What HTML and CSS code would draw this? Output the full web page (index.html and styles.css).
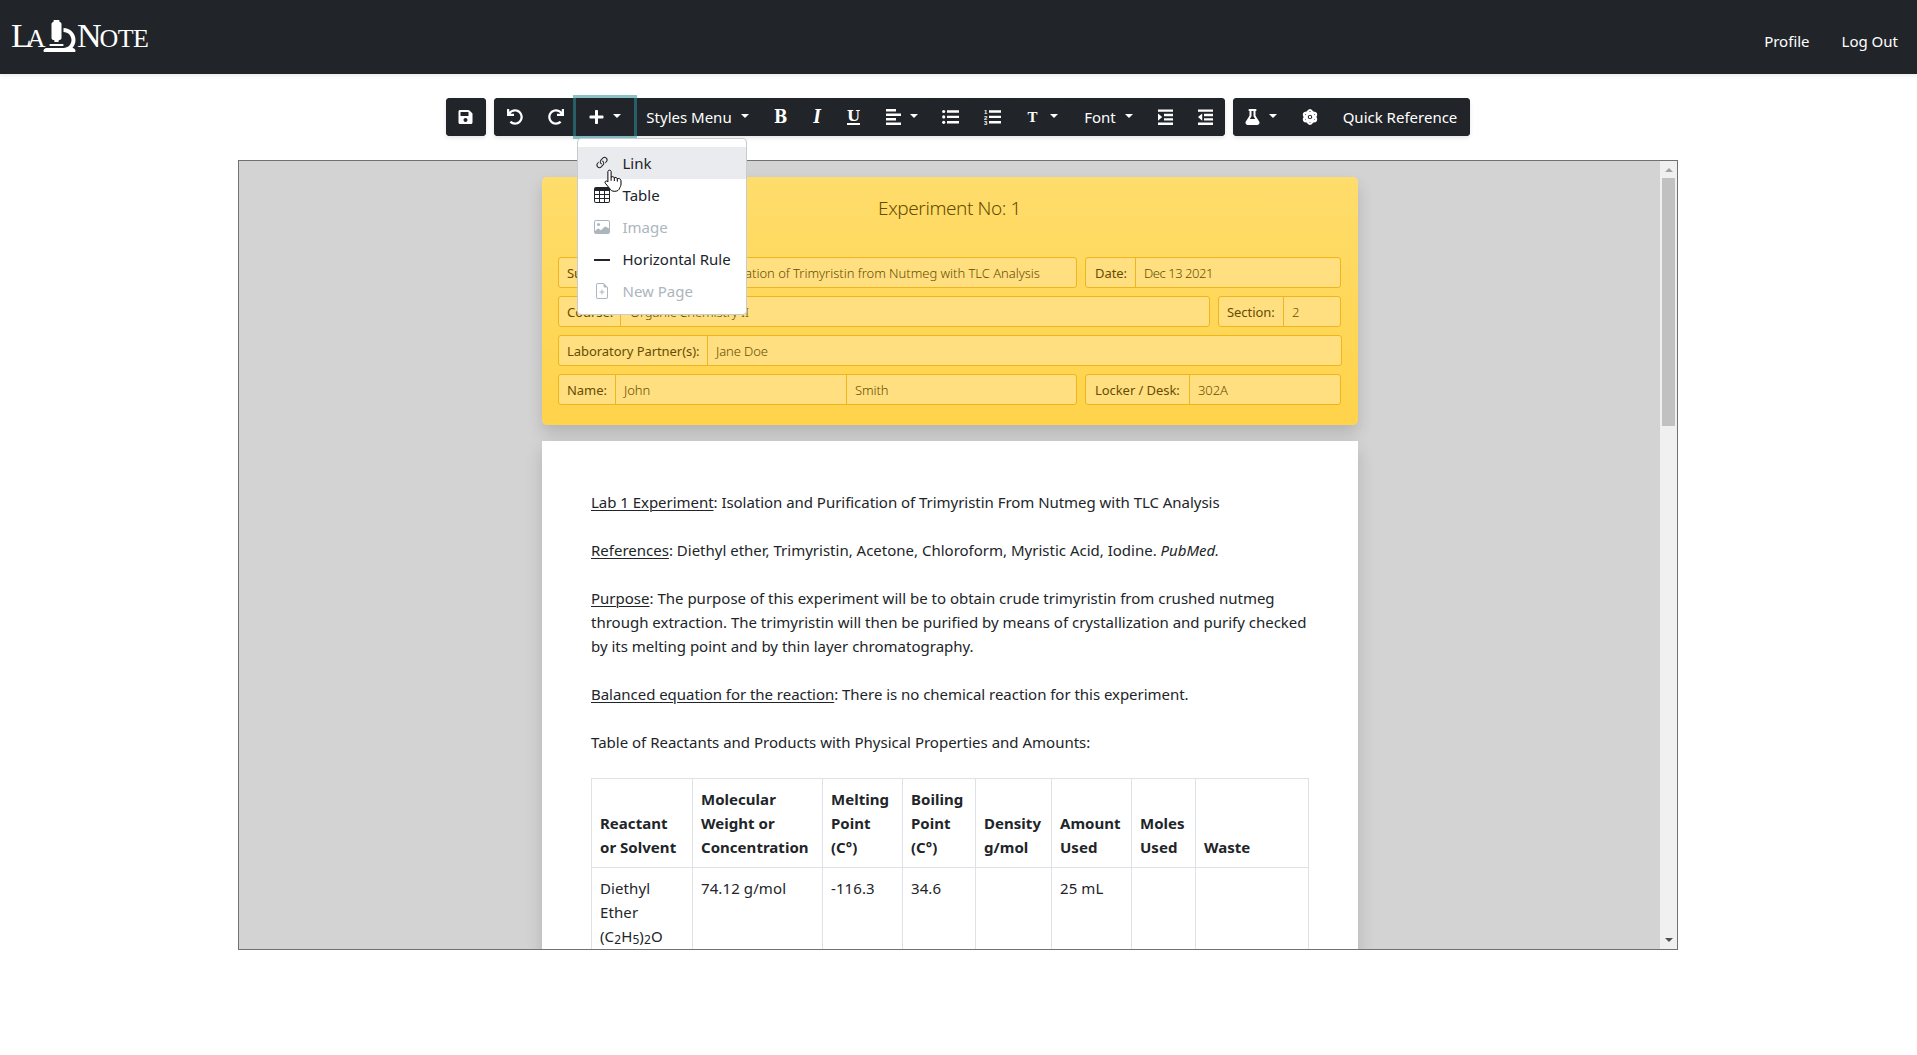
FILE: index.html
```html
<!DOCTYPE html>
<html lang="en">
<head>
<meta charset="utf-8">
<title>LabNote</title>
<link rel="stylesheet" href="styles.css">
</head>
<body>
<header class="navbar">
  <a class="brand"><span class="brand-la">L<small>A</small></span><svg class="brand-icon" viewBox="0 0 512 512"><path d="M160 320h12v16c0 8.84 7.16 16 16 16h40c8.84 0 16-7.16 16-16v-16h12c17.67 0 32-14.33 32-32V64c0-17.67-14.33-32-32-32V16c0-8.84-7.16-16-16-16h-64c-8.84 0-16 7.16-16 16v16c-17.67 0-32 14.33-32 32v224c0 17.67 14.33 32 32 32zm304 128h-1.29C493.24 413.99 512 369.2 512 320c0-105.88-86.12-192-192-192v64c70.58 0 128 57.42 128 128s-57.42 128-128 128H48c-26.51 0-48 21.49-48 48 0 8.84 7.16 16 16 16h480c8.84 0 16-7.16 16-16 0-26.51-21.49-48-48-48zm-360-32h208c4.42 0 8-3.58 8-8v-16c0-4.42-3.58-8-8-8H104c-4.42 0-8 3.58-8 8v16c0 4.42 3.58 8 8 8z"/></svg><span class="brand-note">N<small>OTE</small></span></a>
  <nav class="nav-links"><a>Profile</a><a>Log Out</a></nav>
</header>

<div class="toolbar">
  <div class="btn-group">
    <button class="btn w-save"><svg class="icon" viewBox="0 0 448 512"><path d="M433.941 129.941l-83.882-83.882A48 48 0 0 0 316.118 32H48C21.49 32 0 53.49 0 80v352c0 26.51 21.49 48 48 48h352c26.51 0 48-21.49 48-48V163.882a48 48 0 0 0-14.059-33.941zM224 416c-35.346 0-64-28.654-64-64 0-35.346 28.654-64 64-64s64 28.654 64 64c0 35.346-28.654 64-64 64zm96-304.52V212c0 6.627-5.373 12-12 12H76c-6.627 0-12-5.373-12-12V108c0-6.627 5.373-12 12-12h228.52c3.183 0 6.235 1.264 8.485 3.515l3.48 3.48A11.996 11.996 0 0 1 320 111.48z"/></svg></button>
  </div>
  <div class="btn-group">
    <button class="btn w-undo"><svg class="icon icon-16" viewBox="0 0 512 512"><path d="M212.333 224.333H12c-6.627 0-12-5.373-12-12V12C0 5.373 5.373 0 12 0h48c6.627 0 12 5.373 12 12v78.112C117.773 39.279 184.26 7.47 258.175 8.007c136.906.994 246.448 111.623 246.157 248.532C504.041 393.258 393.12 504 256.333 504c-64.089 0-122.496-24.313-166.51-64.215-5.099-4.622-5.334-12.554-.467-17.42l33.967-33.967c4.474-4.474 11.662-4.717 16.401-.525C170.76 415.336 211.58 432 256.333 432c97.268 0 176-78.716 176-176 0-97.267-78.716-176-176-176-58.496 0-110.28 28.476-142.274 72.333h98.274c6.627 0 12 5.373 12 12v48c0 6.627-5.373 12-12 12z"/></svg></button>
    <button class="btn w-redo"><svg class="icon icon-16 flip" viewBox="0 0 512 512"><path d="M212.333 224.333H12c-6.627 0-12-5.373-12-12V12C0 5.373 5.373 0 12 0h48c6.627 0 12 5.373 12 12v78.112C117.773 39.279 184.26 7.47 258.175 8.007c136.906.994 246.448 111.623 246.157 248.532C504.041 393.258 393.12 504 256.333 504c-64.089 0-122.496-24.313-166.51-64.215-5.099-4.622-5.334-12.554-.467-17.42l33.967-33.967c4.474-4.474 11.662-4.717 16.401-.525C170.76 415.336 211.58 432 256.333 432c97.268 0 176-78.716 176-176 0-97.267-78.716-176-176-176-58.496 0-110.28 28.476-142.274 72.333h98.274c6.627 0 12 5.373 12 12v48c0 6.627-5.373 12-12 12z"/></svg></button>
    <div class="dropdown">
      <button class="btn w-insert focused"><svg class="icon" viewBox="0 0 448 512"><path d="M416 208H272V64c0-17.67-14.33-32-32-32h-32c-17.67 0-32 14.33-32 32v144H32c-17.67 0-32 14.33-32 32v32c0 17.67 14.33 32 32 32h144v144c0 17.67 14.33 32 32 32h32c17.67 0 32-14.33 32-32V304h144c17.67 0 32-14.33 32-32v-32c0-17.67-14.33-32-32-32z"/></svg><i class="caret"></i></button>
      <ul class="menu">
        <li class="menu-item active"><svg viewBox="0 0 16 16"><path d="M4.715 6.542 3.343 7.914a3 3 0 1 0 4.243 4.243l1.828-1.829A3 3 0 0 0 8.586 5.5L8 6.086a1.002 1.002 0 0 0-.154.199 2 2 0 0 1 .861 3.337L6.88 11.45a2 2 0 1 1-2.83-2.83l.793-.792a4.018 4.018 0 0 1-.128-1.287z"/><path d="M6.586 4.672A3 3 0 0 0 7.414 9.5l.775-.776a2 2 0 0 1-.896-3.346L9.12 3.55a2 2 0 1 1 2.83 2.83l-.793.792c.112.42.155.855.128 1.287l1.372-1.372a3 3 0 1 0-4.243-4.243L6.586 4.672z"/></svg>Link</li>
        <li class="menu-item"><svg viewBox="0 0 16 16"><path d="M0 2a2 2 0 0 1 2-2h12a2 2 0 0 1 2 2v12a2 2 0 0 1-2 2H2a2 2 0 0 1-2-2V2zm15 2h-4v3h4V4zm0 4h-4v3h4V8zm0 4h-4v3h3a1 1 0 0 0 1-1v-2zm-5 3v-3H6v3h4zm-5 0v-3H1v2a1 1 0 0 0 1 1h3zm-4-4h4V8H1v3zm0-4h4V4H1v3zm5-3v3h4V4H6zm4 4H6v3h4V8z"/></svg>Table</li>
        <li class="menu-item disabled"><svg viewBox="0 0 16 16"><path d="M6.002 5.5a1.5 1.5 0 1 1-3 0 1.5 1.5 0 0 1 3 0z"/><path d="M2.002 1a2 2 0 0 0-2 2v10a2 2 0 0 0 2 2h12a2 2 0 0 0 2-2V3a2 2 0 0 0-2-2h-12zm12 1a1 1 0 0 1 1 1v6.5l-3.777-1.947a.5.5 0 0 0-.577.093l-3.71 3.71-2.66-1.772a.5.5 0 0 0-.63.062L1.002 12V3a1 1 0 0 1 1-1h12z"/></svg>Image</li>
        <li class="menu-item"><svg viewBox="0 0 16 16"><rect x="0" y="8" width="16" height="2"/></svg>Horizontal Rule</li>
        <li class="menu-item disabled"><svg viewBox="0 0 16 16"><path d="M8 6.500a.5.5 0 0 1 .5.5v1.500H10a.5.5 0 0 1 0 1H8.500V11a.5.5 0 0 1-1 0V9.500H6a.5.5 0 0 1 0-1h1.500V7a.5.5 0 0 1 .5-.5z"/><path d="M14 4.500V14a2 2 0 0 1-2 2H4a2 2 0 0 1-2-2V2a2 2 0 0 1 2-2h5.500L14 4.500zm-3 0A1.500 1.500 0 0 1 9.500 3V1H4a1 1 0 0 0-1 1v12a1 1 0 0 0 1 1h8a1 1 0 0 0 1-1V4.500h-2z"/></svg>New Page</li>
      </ul>
      <svg class="pointer" viewBox="0 0 18 23"><path d="M5.500 1.200c1 0 1.600.7 1.600 1.600v5.400c.5-.8 2.900-.8 3.200.6.800-.7 2.600-.4 2.900.9 1-.5 3.600-.3 3.800 2v3.300c0 2-.8 2.900-1.400 4.100-.5 1.900-2.200 3.200-4.800 3.200-2.900 0-4-.9-5-2.600L1.300 14.200c-1.100-1.600 1-3.300 2.600-1.300V2.800c0-.9.600-1.600 1.600-1.600z" fill="#fff" stroke="#000" stroke-width="1"/><path d="M7.100 8v3.800M10.300 9v3M13.300 10v2.600" stroke="#000" fill="none"/></svg>
    </div>
    <button class="btn w-styles">Styles Menu<i class="caret"></i></button>
    <button class="btn w-bold"><b class="glyph">B</b></button>
    <button class="btn w-italic"><b class="glyph glyph-italic">I</b></button>
    <button class="btn w-underline"><b class="glyph glyph-underline">U</b></button>
    <button class="btn w-align"><svg class="icon" viewBox="0 0 15 16"><path d="M0 0h10v2.400H0zM0 4.500h15v2.400H0zM0 9h10v2.400H0zM0 13.500h15v2.400H0z"/></svg><i class="caret"></i></button>
    <button class="btn w-list"><svg class="icon icon-17" viewBox="0 0 17 16"><path d="M5 1.300h12v2.400H5zM5 6.700h12v2.400H5zM5 12.100h12v2.400H5z"/><circle cx="1.700" cy="2.500" r="1.600"/><circle cx="1.700" cy="7.900" r="1.600"/><circle cx="1.700" cy="13.300" r="1.600"/></svg></button>
    <button class="btn w-list"><svg class="icon icon-17" viewBox="0 0 17 16"><path d="M5 1.300h12v2.400H5zM5 6.700h12v2.400H5zM5 12.100h12v2.400H5z"/><g class="ol-digits"><text x="0" y="5">1</text><text x="0" y="10.500">2</text><text x="0" y="16">3</text></g></svg></button>
    <button class="btn w-type"><b class="glyph glyph-type">T</b><i class="caret"></i></button>
    <button class="btn w-font">Font<i class="caret"></i></button>
    <button class="btn w-indent"><svg class="icon" viewBox="0 0 15 16"><path d="M0 .4h15v2.400H0zM6 4.800h9v2.400H6zM6 9.200h9v2.400H6zM0 13.500h15v2.400H0zM0 4.400l4.200 3.700L0 11.800z"/></svg></button>
    <button class="btn w-outdent"><svg class="icon" viewBox="0 0 15 16"><path d="M0 .4h15v2.400H0zM6 4.800h9v2.400H6zM6 9.200h9v2.400H6zM0 13.500h15v2.400H0zM4.200 4.400L0 8.100l4.200 3.700z"/></svg></button>
  </div>
  <div class="btn-group">
    <button class="btn w-flask"><svg class="icon" viewBox="0 0 448 512"><path d="M437.200 403.500L320 215V64h8c13.300 0 24-10.700 24-24V24c0-13.300-10.700-24-24-24H120c-13.300 0-24 10.700-24 24v16c0 13.300 10.700 24 24 24h8v151L10.800 403.500C-18.500 450.600 15.300 512 70.900 512h306.200c55.700 0 89.400-61.500 60.100-108.500zM137.900 320l48.200-77.600c3.700-5.200 5.800-11.600 5.800-18.400V64h64v160c0 6.900 2.200 13.200 5.800 18.400l48.200 77.600h-172z"/></svg><i class="caret"></i></button>
    <button class="btn w-atom"><svg class="icon icon-16" viewBox="0 0 16 16"><g fill="none" stroke="#fff" stroke-width="2.300"><ellipse cx="8" cy="8" rx="3.300" ry="6.800"/><ellipse cx="8" cy="8" rx="3.300" ry="6.800" transform="rotate(60 8 8)"/><ellipse cx="8" cy="8" rx="3.300" ry="6.800" transform="rotate(120 8 8)"/></g><circle cx="8" cy="8" r="1.200"/></svg></button>
    <button class="btn w-quick">Quick Reference</button>
  </div>
</div>

<main class="editor">
  <div class="scroll-area">
    <section class="cover">
      <h1 class="cover-title">Experiment No: 1</h1>
      <div class="row">
        <div class="field grow"><label>Subject:</label><span class="value subject">Isolation and Purification of Trimyristin from Nutmeg with TLC Analysis</span></div>
        <div class="field w-side"><label class="date-label">Date:</label><span class="value date">Dec 13 2021</span></div>
      </div>
      <div class="row">
        <div class="field grow"><label class="course-label">Course:</label><span class="value">Organic Chemistry II</span></div>
        <div class="field w-section"><label class="section-label">Section:</label><span class="value">2</span></div>
      </div>
      <div class="row row-wide">
        <div class="field grow"><label class="partner-label">Laboratory Partner(s):</label><span class="value">Jane Doe</span></div>
      </div>
      <div class="row">
        <div class="field grow"><label class="name-label">Name:</label><span class="value first-name">John</span><span class="value">Smith</span></div>
        <div class="field w-side"><label class="desk-label">Locker / Desk:</label><span class="value">302A</span></div>
      </div>
    </section>

    <article class="page">
      <p class="lead"><u>Lab 1 Experiment</u>: Isolation and Purification of Trimyristin From Nutmeg with TLC Analysis</p>
      <p><u>References</u>: Diethyl ether, Trimyristin, Acetone, Chloroform, Myristic Acid, Iodine. <em>PubMed.</em></p>
      <p><u>Purpose</u>: The purpose of this experiment will be to obtain crude trimyristin from crushed nutmeg<br>through extraction. The trimyristin will then be purified by means of crystallization and purify checked<br>by its melting point and by thin layer chromatography.</p>
      <p class="lead"><u>Balanced equation for the reaction</u>: There is no chemical reaction for this experiment.</p>
      <p>Table of Reactants and Products with Physical Properties and Amounts:</p>
      <table>
        <colgroup><col class="c1"><col class="c2"><col class="c3"><col class="c4"><col class="c5"><col class="c6"><col class="c7"><col class="c8"></colgroup>
        <thead><tr><th>Reactant<br>or Solvent</th><th>Molecular<br>Weight or<br>Concentration</th><th>Melting<br>Point<br>(C°)</th><th>Boiling<br>Point<br>(C°)</th><th>Density<br>g/mol</th><th>Amount<br>Used</th><th>Moles<br>Used</th><th>Waste</th></tr></thead>
        <tbody><tr><td>Diethyl<br>Ether<br>(C<sub>2</sub>H<sub>5</sub>)<sub>2</sub>O</td><td>74.12 g/mol</td><td>-116.3</td><td>34.6</td><td></td><td>25 mL</td><td></td><td></td></tr></tbody>
      </table>
    </article>
  </div>
  <div class="scrollbar"><i class="arrow-up"></i><div class="thumb"></div><i class="arrow-down"></i></div>
</main>
</body>
</html>
```
FILE: styles.css
```css
* { box-sizing: border-box; }

body {
  margin: 0;
  height: 1055px;
  overflow: hidden;
  background: #fff;
  color: #212529;
  font: 15px/24px "Noto Sans", "Open Sans", sans-serif;
}

/* Header */
.navbar {
  height: 74px;
  padding: 0 19px 0 11px;
  display: flex;
  justify-content: space-between;
  background: #212529;
  color: #fff;
  box-shadow: 0 2px 4px rgba(0, 0, 0, .08);
}
.brand {
  display: flex;
  align-items: baseline;
  height: 52px;
  padding-top: 20px;
  font-family: "Liberation Serif", serif;
  line-height: 32px;
}
.brand-la { width: 32px; font-size: 34px; letter-spacing: -5px; }
.brand-note { margin-left: 1px; font-size: 34px; letter-spacing: -2px; }
.brand small { font-size: 26px; letter-spacing: -.6px; }
.brand-icon { width: 33px; height: 32px; fill: #fff; align-self: flex-start; }
.nav-links { display: flex; gap: 32px; padding-top: 29px; }

/* Toolbar */
.toolbar {
  display: flex;
  justify-content: center;
  gap: 8px;
  margin-top: 24px;
  padding-right: 2px;
  height: 38px;
}
.btn-group {
  display: flex;
  border-radius: 4px;
  background: #212529;
  box-shadow: 0 2px 4px rgba(0, 0, 0, .1);
}
.btn {
  display: flex;
  align-items: center;
  justify-content: center;
  height: 38px;
  padding: 0;
  border: 0;
  background: #212529;
  color: #fff;
  font: inherit;
  border-radius: 4px;
  white-space: nowrap;
}
.icon { width: 15px; height: 16px; fill: #fff; flex: none; }
.icon-16 { width: 16px; }
.icon-17 { width: 17px; }
.flip { transform: scaleX(-1); }
.caret {
  width: 0;
  border: 4.5px solid transparent;
  border-top-color: #fff;
  border-bottom: 0;
  margin: -3px 0 0 9px;
}
.w-save { width: 40px; }
.w-undo { width: 42px; }
.w-redo { width: 40px; }
.w-insert { width: 58px; }
.w-styles { width: 128px; }
.w-bold { width: 39px; }
.w-italic { width: 33px; }
.w-underline { width: 40px; }
.w-align { width: 56px; }
.w-list { width: 42px; }
.w-type { width: 58px; }
.w-font { width: 74px; }
.w-indent { width: 40px; }
.w-outdent { width: 39px; }
.w-flask { width: 57px; }
.w-atom { width: 41px; }
.w-quick { width: 139px; }
.focused {
  position: relative;
  border-radius: 0;
  box-shadow: 0 0 0 3px rgba(44, 143, 152, .55);
}
.glyph { font: bold 18px/20px "DejaVu Serif", serif; transform: scaleX(.88); margin-top: -1px; }
.glyph-italic { font-style: italic; }
.glyph-underline {
  font-size: 15px;
  line-height: 14px;
  border-bottom: 2px solid #fff;
  transform: none;
}
.glyph-type { font: bold 15px/20px "Liberation Serif", serif; transform: none; }
.glyph-type + .caret { margin-left: 12px; }
.ol-digits { font: bold 6px "Liberation Sans", sans-serif; }

/* Insert menu */
.dropdown { position: relative; z-index: 2; }
.menu {
  position: absolute;
  left: 1px;
  top: 40px;
  width: 170px;
  height: 177px;
  margin: 0;
  padding: 8px 0;
  list-style: none;
  background: #fff;
  border: 1px solid #c9cbcd;
  border-radius: 4px;
}
.menu-item {
  display: flex;
  align-items: center;
  height: 32px;
  padding-left: 16px;
  gap: 13px;
  white-space: nowrap;
}
.menu-item svg { width: 16px; height: 16px; margin-top: -1px; fill: currentColor; }
.menu-item.active { background: #e9ebee; }
.menu-item.disabled { color: #adb5bd; }
.pointer { position: absolute; left: 28px; top: 71px; width: 18px; height: 23px; }

/* Editor viewport */
.editor {
  display: flex;
  width: 1440px;
  height: 790px;
  margin: 24px 0 0 238px;
  border: 1px solid #6f7275;
  background: #d3d3d3;
}
.scroll-area { flex: 1; overflow: hidden; padding: 16px 0 0 303px; }
.scrollbar {
  width: 17px;
  display: flex;
  flex-direction: column;
  align-items: center;
  background: #f0f0f0;
}
.thumb { width: 13px; height: 248px; margin: 6px 0 auto; background: #c1c1c1; }
.arrow-up, .arrow-down { border: 4px solid transparent; }
.arrow-up { border-top: 0; border-bottom-color: #a3a3a3; margin-top: 7px; }
.arrow-down { border-bottom: 0; border-top-color: #505050; margin-bottom: 7px; }

/* Cover card */
.cover {
  width: 816px;
  height: 248px;
  padding: 18px 17px 0 16px;
  border-radius: 5px;
  background: linear-gradient(#ffdd6c, #ffd34a);
  box-shadow: 0 8px 16px rgba(0, 0, 0, .15);
  color: #664d03;
}
.cover-title {
  height: 62px;
  margin: 0;
  text-align: center;
  font-size: 19px;
  font-weight: 300;
  line-height: 27px;
  letter-spacing: -.42px;
}
.row { display: flex; gap: 8px; margin-bottom: 8px; }
.row-wide { margin-right: -1px; }
.field {
  display: flex;
  height: 31px;
  border: 1px solid #f0b41c;
  border-radius: 3px;
  background: #ffdf80;
  font-size: 13px;
  line-height: 30px;
  white-space: nowrap;
}
.grow { flex: 1; }
.field label { padding-left: 8px; border-right: 1px solid #f0b41c; letter-spacing: -.06px; width: 64px; flex: none; }
.value { padding-left: 8px; font-weight: 300; letter-spacing: -.1px; }
.subject { padding-left: 6px; letter-spacing: -.03px; }
.date { letter-spacing: -.45px; }
.w-side { width: 256px; }
.w-section { width: 123px; }
.field .date-label { width: 50px; padding-left: 9px; }
.field .course-label { width: 62px; }
.field .course-label + .value { padding-left: 9px; }
.field .section-label { width: 65px; }
.field .partner-label { width: 149px; }
.field .name-label { width: 57px; }
.field .desk-label { width: 104px; padding-left: 9px; }
.first-name { width: 231px; border-right: 1px solid #f0b41c; }

/* Document page */
.page {
  width: 816px;
  min-height: 1056px;
  margin-top: 16px;
  padding: 49px 48px 0 49px;
  background: #fff;
  box-shadow: 0 8px 16px rgba(0, 0, 0, .15);
}
.page p { margin: 0 0 24px; white-space: nowrap; }
.page .lead { letter-spacing: -.035px; }
.page u { text-underline-offset: 2px; text-decoration-thickness: 1px; }
table {
  width: 718px;
  table-layout: fixed;
  border-collapse: collapse;
}
th, td {
  padding: 8px 0 8px 8px;
  border: 1px solid #dee2e6;
  text-align: left;
  white-space: nowrap;
}
th { vertical-align: bottom; letter-spacing: .03px; }
td { vertical-align: top; letter-spacing: .1px; }
sub { font-size: 12px; line-height: 0; vertical-align: -2px; }
.c1 { width: 101px; }
.c2 { width: 130px; }
.c3 { width: 80px; }
.c4 { width: 73px; }
.c5 { width: 76px; }
.c6 { width: 80px; }
.c7 { width: 64px; }
.c8 { width: 113px; }
```
